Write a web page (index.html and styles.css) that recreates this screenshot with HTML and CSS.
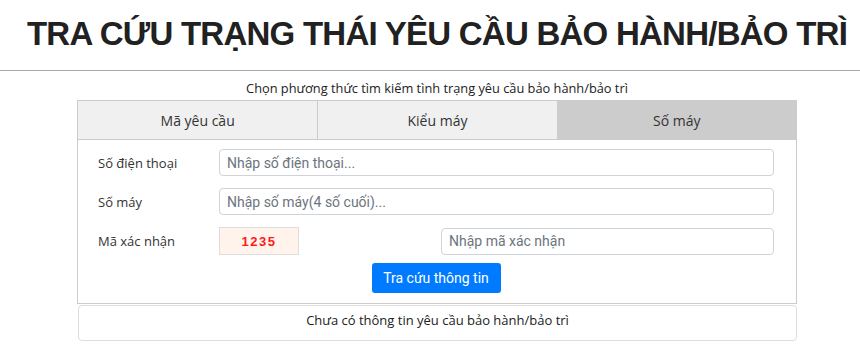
FILE: index.html
```html
<!DOCTYPE html>
<html lang="vi">
<head>
<meta charset="utf-8">
<title>Tra cứu trạng thái yêu cầu bảo hành/bảo trì</title>
<link rel="stylesheet" href="styles.css">
</head>
<body>
<header class="page-head">
  <h1 class="title">TRA CỨU TRẠNG THÁI YÊU CẦU BẢO HÀNH/BẢO TRÌ</h1>
</header>
<main class="main">
  <p class="hint">Chọn phương thức tìm kiếm tình trạng yêu cầu bảo hành/bảo trì</p>
  <section class="card">
    <nav class="tabs">
      <div class="tab">Mã yêu cầu</div>
      <div class="tab">Kiểu máy</div>
      <div class="tab active">Số máy</div>
    </nav>
    <form class="form">
      <div class="row">
        <label class="label">Số điện thoại</label>
        <input class="input" type="text" placeholder="Nhập số điện thoại...">
      </div>
      <div class="row">
        <label class="label">Số máy</label>
        <input class="input" type="text" placeholder="Nhập số máy(4 số cuối)...">
      </div>
      <div class="row">
        <label class="label">Mã xác nhận</label>
        <div class="captcha-row">
          <div class="captcha">1235</div>
          <input class="input captcha-input" type="text" placeholder="Nhập mã xác nhận">
        </div>
      </div>
      <div class="actions">
        <button class="btn" type="button">Tra cứu thông tin</button>
      </div>
    </form>
  </section>
  <section class="result">Chưa có thông tin yêu cầu bảo hành/bảo trì</section>
</main>
</body>
</html>
```
FILE: styles.css
```css
* { box-sizing: border-box; }
html, body { margin: 0; padding: 0; background: #fff; }
body {
  font-family: "Segoe UI", "Open Sans", "Liberation Sans", Arial, sans-serif;
  color: #212529;
  overflow: hidden;
}
.page-head {
  border-bottom: 1px solid #aaa;
  padding-left: 14px;
  height: 71px;
}
.title {
  margin: 0;
  padding-top: 15px;
  text-align: center;
  white-space: nowrap;
  font-family: "Liberation Sans", Arial, sans-serif;
  font-weight: bold;
  font-size: 33px;
  line-height: 38px;
  color: #212121;
  letter-spacing: -0.75px;
}
.main {
  padding-left: 14px;
  display: flex;
  flex-direction: column;
  align-items: center;
}
.hint {
  margin: 7px 0 0;
  font-size: 12.8px;
  line-height: 20px;
  color: #222;
}
.card {
  width: 720px;
  border: 1px solid #ccc;
  margin-top: 2px;
}
.tabs {
  display: grid;
  grid-template-columns: 1fr 1fr 1fr;
  border-bottom: 1px solid #ccc;
}
.tab {
  height: 38px;
  display: flex;
  align-items: center;
  justify-content: center;
  background: #f0f0f0;
  font-size: 14px;
  color: #333;
  border-left: 1px solid #ccc;
}
.tab:first-child { border-left: 0; }
.tab.active { background: #ccc; }
.form {
  padding: 9px 22px 10px 20px;
  display: flex;
  flex-direction: column;
  gap: 12px;
}
.row {
  display: flex;
  align-items: center;
}
.label {
  width: 121px;
  flex: none;
  font-size: 13px;
  color: #333;
}
.input {
  flex: 1;
  height: 27px;
  border: 1px solid #ced4da;
  border-radius: 4px;
  padding: 0 7px;
  font-family: Roboto, "Liberation Sans", sans-serif;
  font-size: 14px;
  color: #495057;
  background: #fff;
  outline: none;
}
.input::placeholder { color: #6c757d; opacity: 1; }
.captcha-row {
  flex: 1;
  display: flex;
  align-items: center;
  justify-content: space-between;
}
.captcha {
  width: 80px;
  height: 28px;
  background: #fff3ec;
  border: 1px solid #ddd;
  display: flex;
  align-items: center;
  justify-content: center;
  font-family: "Liberation Sans", Arial, sans-serif;
  font-weight: bold;
  font-size: 13px;
  letter-spacing: 1.5px;
  color: #ff1a1a;
}
.captcha-input { flex: none; width: 333px; }
.actions {
  display: flex;
  justify-content: center;
  margin-top: -4px;
}
.btn {
  height: 30px;
  width: 129px;
  border: 0;
  border-radius: 3px;
  background: #007bff;
  color: #fff;
  font-family: Roboto, "Liberation Sans", sans-serif;
  font-size: 14px;
  padding: 0;
}
.result {
  width: 719px;
  margin-top: 1px;
  margin-left: 1px;
  height: 36px;
  border: 1px solid #ddd;
  border-radius: 4px;
  text-align: center;
  font-size: 13px;
  line-height: 28px;
  color: #222;
}
```
